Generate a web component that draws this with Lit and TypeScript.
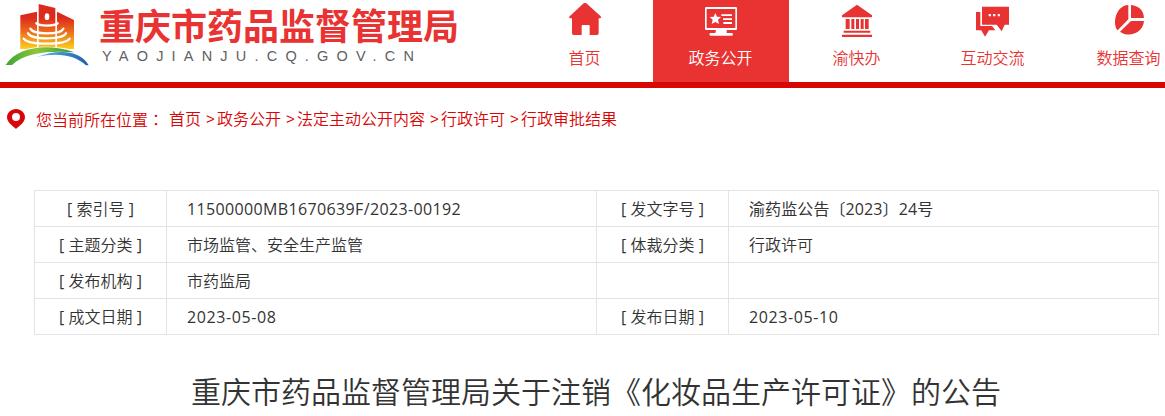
import { LitElement, css, html, svg, type TemplateResult } from 'lit'
import { customElement, property } from 'lit/decorators.js'
import { classMap } from 'lit/directives/class-map.js'

interface NavItem {
  label: string
  icon: string
  active?: boolean
}

interface MetaCell {
  label: string
  value: string
  kind?: 'code' | 'date' | 'mixed'
}

const NAV: readonly NavItem[] = [
  { label: '首页', icon: 'home' },
  { label: '政务公开', icon: 'screen', active: true },
  { label: '渝快办', icon: 'bank' },
  { label: '互动交流', icon: 'chat' },
  { label: '数据查询', icon: 'pie' },
]

const CRUMBS = ['首页', '政务公开', '法定主动公开内容', '行政许可', '行政审批结果']

const META: readonly MetaCell[] = [
  { label: '索引号', value: '11500000MB1670639F/2023-00192', kind: 'code' },
  { label: '发文字号', value: '渝药监公告〔2023〕24号', kind: 'mixed' },
  { label: '主题分类', value: '市场监管、安全生产监管' },
  { label: '体裁分类', value: '行政许可' },
  { label: '发布机构', value: '市药监局' },
  { label: '', value: '' },
  { label: '成文日期', value: '2023-05-08', kind: 'date' },
  { label: '发布日期', value: '2023-05-10', kind: 'date' },
]

const ICONS: Record<string, TemplateResult> = {
  home: svg`
    <path d="M60 9q2-1 4 1l43 39q3 4-1 6h-5v45q0 5-5 5H74V78q0-3-3-3H53q-3 0-3 3v27H26q-5 0-5-5V55h-6q-5-2-1-6L56 10q2-2 4-1z"/>
  `,
  screen: svg`
    <path fill-rule="evenodd" d="M16 21h88q4 0 4 4v61q0 4-4 4H16q-4 0-4-4V25q0-4 4-4zm1 6v57h86V27z"/>
    <path d="M45 90h32v9h17q4 4 0 8H27q-4-4 0-8h16z"/>
    <path d="M43 39l5 11 12 1-9 8 3 13-11-6-11 6 3-13-9-8 12-1z"/>
    <path d="M61 43h32v5H61zM66 55h27v5H66zM67 66h26v6H67z"/>
  `,
  bank: svg`
    <path d="M60 14l45 32v6H15v-6zM26 57h12v30H26zM43 57h9v30h-9zM57 57h9v30h-9zM71 57h9v30h-9zM84 57h11v30H84zM20 92h80v6H20zM15 104h90v7H15z"/>
  `,
  chat: svg`
    <path d="M9 36h13v42h31l4 0 10 13H48L36 110 25 91H9z"/>
    <path fill-rule="evenodd" d="M27 20h81v54H95L86 94 71 74H27zM47 42v7h7v-7zm13 0v7h7v-7zm14 0v7h7v-7z"/>
  `,
  pie: svg`
    <path d="M58 15v43L26 91C10 75 18 17 58 15zM66 15q37 5 39 39H66zM66 63h39c-3 37-46 51-72 32z"/>
  `,
}

@customElement('nav-tab')
export class NavTab extends LitElement {
  @property({ attribute: false }) item!: NavItem

  static styles = css`
    :host {
      display: block;
      flex: none;
      width: 136px;
    }

    a {
      display: flex;
      flex-direction: column;
      align-items: center;
      height: 82px;
      color: #e83332;
      text-decoration: none;
    }
    a.active {
      color: #fff;
      background: #e83332;
    }

    svg {
      width: 40px;
      height: 40px;
      fill: currentColor;
    }

    .label {
      margin-right: 1px;
      font-size: 16px;
      line-height: 36px;
      white-space: nowrap;
    }
  `

  render() {
    return html`
      <a class=${classMap({ active: !!this.item.active })}>
        <svg viewBox="0 0 120 120">${ICONS[this.item.icon]}</svg>
        <span class="label">${this.item.label}</span>
      </a>
    `
  }
}

@customElement('app-root')
export class AppRoot extends LitElement {
  static styles = css`
    :host {
      display: block;
      height: 416px;
      overflow: hidden;
      background: #fff;
      color: #333;
      font-family: 'Open Sans', 'Noto Sans CJK SC', sans-serif;
      font-size: 16px;
      font-weight: 350;
    }

    header {
      display: flex;
      height: 82px;
      border-bottom: 6px solid #d90606;
    }

    .brand {
      display: flex;
      flex: none;
      width: 517px;
    }
    .emblem {
      flex: none;
      width: 99px;
      height: 75px;
    }
    .name {
      font-family: 'Noto Sans CJK SC', sans-serif;
      font-size: 36px;
      font-weight: 700;
      line-height: 48px;
      color: #e83332;
      white-space: nowrap;
    }
    .domain {
      padding-left: 3px;
      font-family: 'Liberation Sans', sans-serif;
      font-size: 14.5px;
      font-weight: 400;
      line-height: 16px;
      letter-spacing: 8.2px;
      color: #606060;
      white-space: nowrap;
    }

    nav { display: flex; }

    .crumbs {
      display: flex;
      align-items: center;
      height: 62px;
      padding-left: 7px;
      color: #d90606;
      line-height: 24px;
      white-space: nowrap;
    }
    .pin {
      width: 18px;
      height: 22px;
      margin-right: 11px;
    }
    .here {
      width: 133px;
      height: 24px;
    }
    .colon { font-family: 'Noto Sans CJK TC', sans-serif; }
    .sep {
      width: 11px;
      padding-left: 5px;
      font-family: 'Liberation Sans', sans-serif;
      font-size: 15px;
    }

    .meta {
      display: grid;
      grid-template-columns: 132px 430px 132px 430px;
      grid-auto-rows: 36px;
      width: 1124px;
      margin: 40px 0 0 34px;
      border-top: 1px solid #e3e3e3;
      border-left: 1px solid #e3e3e3;
    }
    .cell {
      box-sizing: border-box;
      border-right: 1px solid #e3e3e3;
      border-bottom: 1px solid #e3e3e3;
      line-height: 36px;
      white-space: nowrap;
    }
    .key { text-align: center; }
    .bracket { font-weight: 400; }
    .value { padding-left: 20px; }
    .code, .date, .mixed { font-weight: 400; }
    .code { letter-spacing: 0.36px; }
    .date { letter-spacing: 0.6px; }
    .mixed { letter-spacing: 0.1px; }

    h1 {
      margin: 33px 0 0;
      padding-left: 191px;
      font-size: 30px;
      font-weight: inherit;
      line-height: 48px;
      white-space: nowrap;
    }
  `

  private _emblem() {
    return html`
      <svg class="emblem" viewBox="0 0 297 225">
        <defs>
          <linearGradient id="tower" x1="0" y1="12" x2="0" y2="148" gradientUnits="userSpaceOnUse">
            <stop offset="0.3" stop-color="#dc2a1c" />
            <stop offset="0.6" stop-color="#ec6a1c" />
            <stop offset="1" stop-color="#fdd21c" />
          </linearGradient>
          <linearGradient id="hill">
            <stop offset="0" stop-color="#3da535" />
            <stop offset="0.45" stop-color="#8cc63a" />
            <stop offset="1" stop-color="#2e9c3c" />
          </linearGradient>
          <linearGradient id="river">
            <stop offset="0" stop-color="#5cb8ea" />
            <stop offset="1" stop-color="#1c60a8" />
          </linearGradient>
        </defs>
        <path fill="url(#tower)" d="M61 46l50-11v112H61zM116 26V12l50 12v123h-50zM171 35l51 25v87h-51z" />
        <ellipse cx="141" cy="50" rx="7" ry="10" fill="#fff" />
        <g fill="none" stroke="#fff" stroke-width="7" stroke-linecap="round">
          <path d="M109 70c7 9 57 9 64 0" />
          <path d="M91 86c10 19 90 19 99 0" />
          <path d="M84 100c12 20 104 20 114 0" />
          <path d="M71 116c14 20 124 20 138 0" />
        </g>
        <path fill="#fff" d="M50 156c54-23 125-18 178-5v14H50z" />
        <path fill="url(#hill)" d="M17 195C50 142 140 127 223 157 160 152 76 155 36 195z" />
        <path fill="url(#river)" d="M110 171c62-24 130-22 156 25h-8c-34-32-87-39-148-25z" />
      </svg>
    `
  }

  render() {
    return html`
      <header>
        <div class="brand">
          ${this._emblem()}
          <div>
            <div class="name">重庆市药品监督管理局</div>
            <div class="domain">YAOJIANJU.CQ.GOV.CN</div>
          </div>
        </div>
        <nav>${NAV.map((item) => html`<nav-tab .item=${item}></nav-tab>`)}</nav>
      </header>

      <div class="crumbs">
        <svg class="pin" viewBox="0 0 54 66">
          <path
            fill="#d90606"
            fill-rule="evenodd"
            d="M27 3c15 0 27 11 27 25 0 15-18 27-27 35C18 55 0 43 0 28 0 14 12 3 27 3zm0 12a12 12 0 1 0 0 24 12 12 0 0 0 0-24z"
          />
        </svg>
        <span class="here">您当前所在位置<span class="colon" lang="zh-TW">：</span></span>
        ${CRUMBS.map((c, i) => html`${i ? html`<span class="sep">&gt;</span>` : ''}<span>${c}</span>`)}
      </div>

      <div class="meta">
        ${META.map(
          (m) => html`
            <div class="cell key">
              ${m.label
                ? html`<span class="bracket">[ </span>${m.label}<span class="bracket"> ]</span>`
                : ''}
            </div>
            <div class="cell value ${m.kind ?? ''}">${m.value}</div>
          `,
        )}
      </div>

      <h1>重庆市药品监督管理局关于注销《化妆品生产许可证》的公告</h1>
    `
  }
}
